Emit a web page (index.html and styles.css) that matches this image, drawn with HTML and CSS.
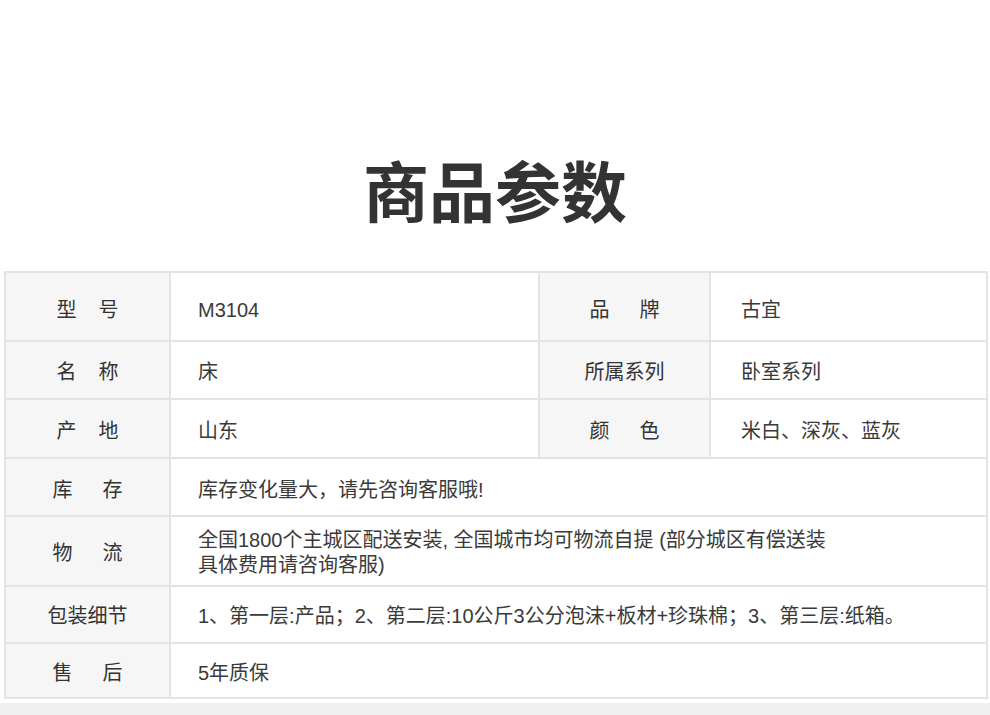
FILE: index.html
```html
<!DOCTYPE html>
<html lang="zh-CN">
<head>
  <meta charset="UTF-8">
  <title>商品参数</title>
  <link rel="stylesheet" href="styles.css">
</head>
<body>
  <h1 class="title">商品参数</h1>

  <table class="params">
    <colgroup>
      <col class="c-label">
      <col class="c-val">
      <col class="c-label2">
      <col class="c-val2">
    </colgroup>
    <tr class="r1">
      <th>型<i class="gap"></i>号</th>
      <td>M3104</td>
      <th>品<i class="gap wide"></i>牌</th>
      <td class="v2">古宜</td>
    </tr>
    <tr class="r2">
      <th>名<i class="gap"></i>称</th>
      <td>床</td>
      <th>所属系列</th>
      <td class="v2">卧室系列</td>
    </tr>
    <tr class="r3">
      <th>产<i class="gap"></i>地</th>
      <td>山东</td>
      <th>颜<i class="gap wide"></i>色</th>
      <td class="v2">米白、深灰、蓝灰</td>
    </tr>
    <tr class="r4">
      <th>库<i class="gap wide"></i>存</th>
      <td colspan="3">库存变化量大，请先咨询客服哦!</td>
    </tr>
    <tr class="r5">
      <th>物<i class="gap wide"></i>流</th>
      <td colspan="3" class="two-line">全国1800个主城区配送安装, 全国城市均可物流自提 (部分城区有偿送装<br>具体费用请咨询客服)</td>
    </tr>
    <tr class="r6">
      <th>包装细节</th>
      <td colspan="3">1、第一层:产品；2、第二层:10公斤3公分泡沫+板材+珍珠棉；3、第三层:纸箱。</td>
    </tr>
    <tr class="r7">
      <th>售<i class="gap wide"></i>后</th>
      <td colspan="3">5年质保</td>
    </tr>
  </table>

  <div class="footer-band"></div>
</body>
</html>
```

FILE: styles.css
```css
body {
  margin: 0;
  background: #ffffff;
  color: #333333;
  font-family: "Liberation Sans", "Noto Sans CJK SC", sans-serif;
}

.title {
  margin: 0;
  padding-top: 155px;
  height: 116px;
  font-size: 66px;
  line-height: 66px;
  font-weight: bold;
  font-family: "Noto Sans CJK SC", sans-serif;
  text-align: center;
  color: #333333;
}

/* 参数表 */
.params {
  margin-left: 4px;
  width: 984px;
  table-layout: fixed;
  border-spacing: 0;
  border-top: 2px solid #e4e4e4;
  border-left: 2px solid #e4e4e4;
  font-size: 20px;
}

.c-label { width: 165px; }
.c-val { width: 369px; }
.c-label2 { width: 171px; }
.c-val2 { width: 277px; }

.params th,
.params td {
  box-sizing: border-box;
  border-right: 2px solid #e4e4e4;
  border-bottom: 2px solid #e4e4e4;
  padding: 4px 0 0;
  line-height: 25px;
  vertical-align: middle;
}

.params th {
  background: #f6f6f6;
  font-weight: normal;
  color: #333333;
  text-align: center;
}

.params td {
  text-align: left;
  padding-left: 27px;
  color: #3a3a3a;
}

.params td.v2 {
  padding-left: 30px;
}

.gap {
  display: inline-block;
  width: 22px;
}
.gap.wide {
  width: 30px;
}

.r1 th, .r1 td { height: 69px; padding-top: 8px; }
.r2 th, .r2 td { height: 58px; }
.r3 th, .r3 td { height: 59px; padding-top: 6px; }
.r4 th, .r4 td { height: 58px; padding-top: 6px; }
.r5 th, .r5 td { height: 70px; }
.r6 th, .r6 td { height: 57px; }
.r7 th, .r7 td { height: 55px; padding-top: 5px; }

.footer-band {
  margin-top: 4px;
  height: 40px;
  background: #f0f0f0;
}
```
